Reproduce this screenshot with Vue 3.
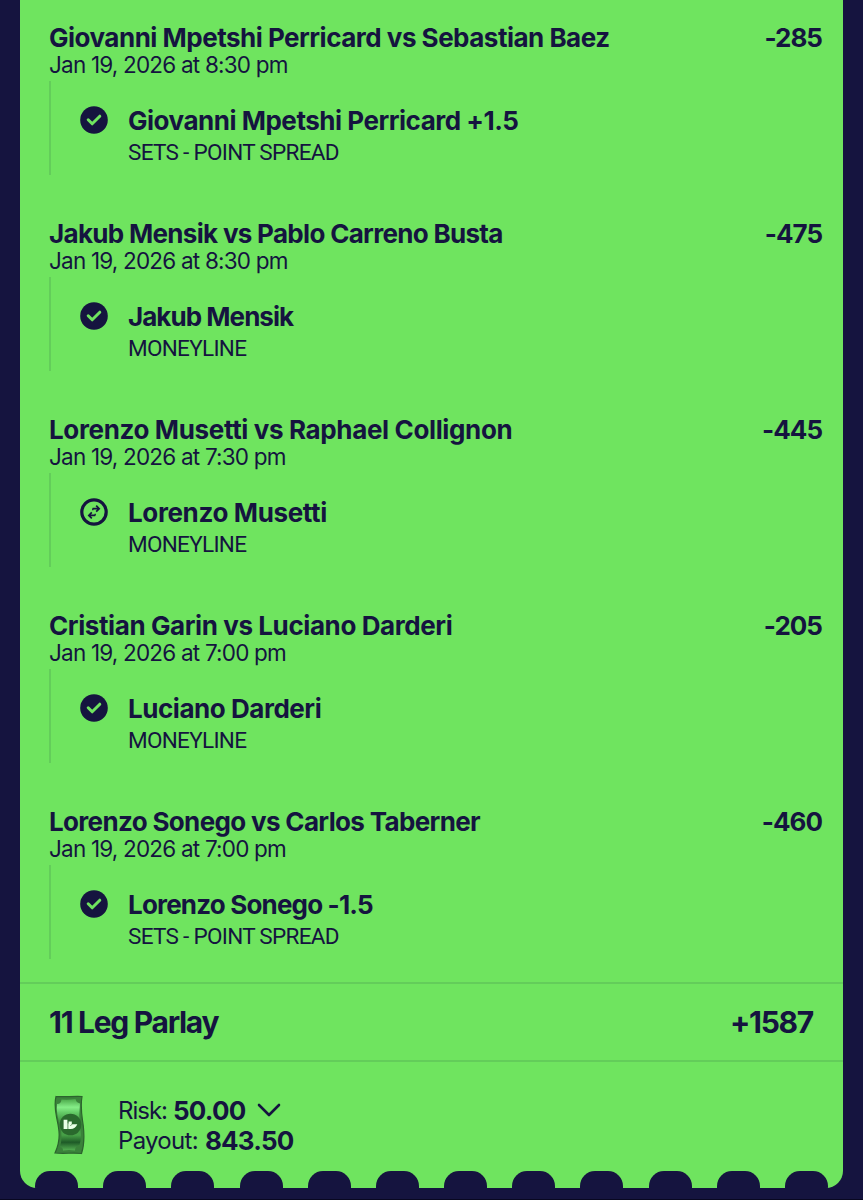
<template>
  <div class="page">
    <main class="ticket">
      <section v-for="leg in legs" :key="leg.match" class="leg">
        <div class="leg-head">
          <h2 class="match" :style="{ letterSpacing: leg.matchTracking }">{{ leg.match }}</h2>
          <span class="odds">{{ leg.odds }}</span>
        </div>
        <p class="date">{{ leg.date }}</p>
        <div class="bet">
          <svg v-if="leg.status === 'won'" class="status" viewBox="0 0 28 28">
            <circle cx="14" cy="14" r="13.8" fill="#15143f" />
            <path d="M8.200 13.800l4 4L19.800 10.200" fill="none" stroke="#6fe45f" stroke-width="3" stroke-linecap="round" stroke-linejoin="round" />
          </svg>
          <svg v-else class="status" viewBox="0 0 28 28" fill="none" stroke="#15143f">
            <circle cx="14" cy="14" r="12.2" stroke-width="3.200" />
            <path d="M12.600 10.700H18.600M16.200 7.700l3 3L16.200 13.700M15.200 17.400H9.400M11.800 14.400l-3 3L11.800 20.400" stroke-width="1.700" />
            <path d="M12.800 10.500v1.800M15.200 15.800v1.800" stroke-width="1.300" />
          </svg>
          <div class="pick">
            <h3 class="pick-name" :style="{ letterSpacing: leg.pickTracking }">{{ leg.pick }}</h3>
            <p class="market">{{ leg.market }}</p>
          </div>
        </div>
      </section>

      <section class="summary">
        <h1 class="parlay">11 Leg Parlay</h1>
        <span class="total">+1587</span>
      </section>

      <section class="stake">
        <svg class="cash" viewBox="0 0 32 60">
          <defs>
            <linearGradient id="bill" x1="0" y1="0" x2="0" y2="1">
              <stop offset="0" stop-color="#4aa849" />
              <stop offset="0.16" stop-color="#86ee88" />
              <stop offset="0.27" stop-color="#62c864" />
              <stop offset="0.42" stop-color="#439b43" />
              <stop offset="0.7" stop-color="#47a047" />
              <stop offset="0.84" stop-color="#1e5a27" />
              <stop offset="1" stop-color="#55b052" />
            </linearGradient>
          </defs>
          <path d="M3 1.500C11 2 20 1.200 29 1.500C27 13 29 21 30.300 31C31.400 41 31 51 28.500 58.500C20 57.500 11 59 2 58C9 43 5.500 32 3.500 22C2 14 1.600 7 3 1.500Z" fill="#3a823a" stroke="#2b632d" stroke-width="1.200" />
          <path d="M8.500 4.500Q16 5 22.500 4Q23 7.500 27 8.500Q25.500 20 27 32Q29 43 26.500 50Q22 51 22 55.500Q16 54.500 10 55.500Q10 52 7 52Q10 42 7 30Q3 18 4 9Q8 9 8.500 4.500Z" fill="url(#bill)" />
          <circle cx="17.500" cy="29.500" r="10.800" fill="#2a692d" />
          <path d="M10.600 24.800h3.800v4h1.200v-2.200h3.200v2.600h5.500c-1.200 3-3.400 4.900-6.700 4.900h-7z" fill="#e9ffe6" />
          <path d="M14.900 29v5M19 29.200l-1.600 1.700" fill="none" stroke="#2a692d" stroke-width="0.700" />
        </svg>
        <div class="amounts">
          <div class="amount">
            <span class="label risk">Risk:</span>
            <strong class="value">50.00</strong>
            <svg class="chevron" viewBox="0 0 24 14">
              <path d="M2 2L12 12L22 2" fill="none" stroke="#15143f" stroke-width="2.600" stroke-linecap="round" stroke-linejoin="round" />
            </svg>
          </div>
          <div class="amount">
            <span class="label">Payout:</span>
            <strong class="value">843.50</strong>
          </div>
        </div>
      </section>

      <div class="perforation">
        <i v-for="n in 12" :key="n" class="notch"></i>
      </div>
    </main>
  </div>
</template>

<script setup>
const legs = [
  {
    match: 'Giovanni Mpetshi Perricard vs Sebastian Baez',
    matchTracking: '-0.5px',
    odds: '-285',
    date: 'Jan 19, 2026 at 8:30 pm',
    status: 'won',
    pick: 'Giovanni Mpetshi Perricard +1.5',
    pickTracking: '-0.48px',
    market: 'SETS - POINT SPREAD'
  },
  {
    match: 'Jakub Mensik vs Pablo Carreno Busta',
    matchTracking: '-0.69px',
    odds: '-475',
    date: 'Jan 19, 2026 at 8:30 pm',
    status: 'won',
    pick: 'Jakub Mensik',
    pickTracking: '-0.96px',
    market: 'MONEYLINE'
  },
  {
    match: 'Lorenzo Musetti vs Raphael Collignon',
    matchTracking: '-0.36px',
    odds: '-445',
    date: 'Jan 19, 2026 at 7:30 pm',
    status: 'push',
    pick: 'Lorenzo Musetti',
    pickTracking: '-0.37px',
    market: 'MONEYLINE'
  },
  {
    match: 'Cristian Garin vs Luciano Darderi',
    matchTracking: '-0.41px',
    odds: '-205',
    date: 'Jan 19, 2026 at 7:00 pm',
    status: 'won',
    pick: 'Luciano Darderi',
    pickTracking: '-0.46px',
    market: 'MONEYLINE'
  },
  {
    match: 'Lorenzo Sonego vs Carlos Taberner',
    matchTracking: '-0.66px',
    odds: '-460',
    date: 'Jan 19, 2026 at 7:00 pm',
    status: 'won',
    pick: 'Lorenzo Sonego -1.5',
    pickTracking: '-0.82px',
    market: 'SETS - POINT SPREAD'
  }
];
</script>

<style>
body {
  margin: 0;
  background: #15143f;
}
</style>

<style scoped>
.page {
  box-sizing: border-box;
  height: 1200px;
  padding: 0 20px;
  overflow: hidden;
  background: #15143f;
  border-bottom: 1px solid #080720;
  color: #15143f;
  font-family: Inter, 'Liberation Sans', sans-serif;
}

.ticket {
  height: 1188px;
  background: #6fe45f;
  border-radius: 0 0 17px 17px;
  overflow: hidden;
}

h1,
h2,
h3,
p {
  margin: 0;
}

.leg {
  box-sizing: border-box;
  height: 196px;
  padding: 23px 21px 0 29px;
}

.leg-head {
  display: flex;
  justify-content: space-between;
  height: 29px;
}

.match,
.odds,
.pick-name {
  font-size: 26px;
  font-weight: 700;
  line-height: 30px;
  white-space: nowrap;
}

.odds {
  letter-spacing: -1px;
}

.date {
  font-size: 22.5px;
  line-height: 26px;
  letter-spacing: -0.8px;
  white-space: nowrap;
}

.bet {
  display: flex;
  box-sizing: border-box;
  height: 94px;
  margin-top: 3px;
  padding: 25px 0 0 29px;
  border-left: 2px solid #63cd5a;
}

.status {
  flex: none;
  width: 28px;
  height: 28px;
}

.pick {
  margin-left: 20px;
}

.market {
  margin-top: 2px;
  font-family: Roboto, Inter, sans-serif;
  font-size: 22.5px;
  line-height: 28px;
  letter-spacing: -0.7px;
  white-space: nowrap;
}

.summary {
  display: flex;
  align-items: center;
  justify-content: space-between;
  box-sizing: border-box;
  height: 80px;
  margin-top: 2px;
  padding: 0 30px 0 29px;
  border-top: 2px solid #63cd5a;
  border-bottom: 2px solid #63cd5a;
}

.parlay,
.total {
  font-size: 30px;
  font-weight: 700;
  line-height: 36px;
  letter-spacing: -1.3px;
}

.stake {
  display: flex;
  height: 76px;
  padding: 33px 0 0 33px;
}

.cash {
  flex: none;
  width: 32px;
  height: 60px;
}

.amounts {
  margin-left: 33px;
}

.amount {
  display: flex;
  align-items: center;
  height: 30px;
}

.label {
  margin-right: 7px;
  font-size: 24px;
  letter-spacing: -0.7px;
}

.risk {
  margin-right: 6px;
  letter-spacing: -1px;
}

.value {
  font-size: 26px;
  font-weight: 700;
  letter-spacing: -0.8px;
}

.chevron {
  width: 24px;
  height: 14px;
  margin-left: 12px;
}

.perforation {
  display: flex;
  justify-content: space-between;
  padding: 0 15px;
}

.notch {
  width: 43px;
  height: 18px;
  background: #15143f;
  border-radius: 15px 15px 0 0;
}
</style>
